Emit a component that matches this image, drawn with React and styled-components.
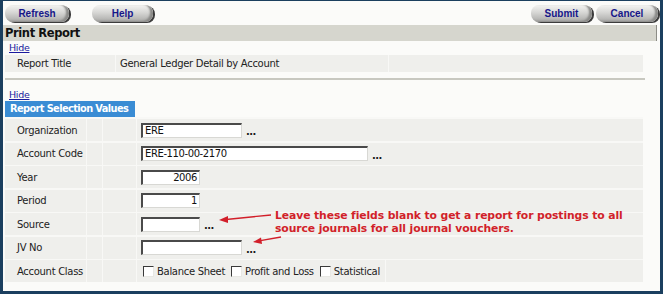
import React from "react";
import styled, { createGlobalStyle } from "styled-components";

const GlobalStyle = createGlobalStyle`
  html, body { margin: 0; padding: 0; background: #ffffff; }
  body { font-family: "DejaVu Sans", Verdana, sans-serif; }
`;

const Frame = styled.div`
  position: relative;
  width: 663px;
  height: 294px;
  box-sizing: border-box;
  border: 3px solid #1b3f5f;
  border-top-width: 1px;
  background: #fbfbf9;
  overflow: hidden;
`;

const Toolbar = styled.div`
  display: flex;
  justify-content: space-between;
  align-items: center;
  height: 24px;
  padding: 0 2px;
  box-sizing: border-box;
`;

const BtnGroup = styled.div`
  display: flex;
  gap: ${(p) => p.gap}px;
`;

const Button = styled.button`
  width: ${(p) => p.w}px;
  height: 17px;
  padding: 0;
  border: none;
  border-radius: 8px;
  background: linear-gradient(#f4f4f2 0%, #d6d6d4 45%, #a9a9a7 100%);
  box-shadow: 2px 1px 0 #3c3c3c, inset -3px -1px 2px #8a8a88;
  color: #16168a;
  font-family: "Liberation Sans", Arial, sans-serif;
  font-weight: 700;
  font-size: 10px;
  cursor: pointer;
`;

const SectionHeader = styled.div`
  width: 654px;
  height: 16px;
  box-sizing: border-box;
  background: #d6d6ce;
  border-right: 1px solid #8c8c86;
  padding-left: 2px;
  font-weight: 700;
  font-size: 11.5px;
  letter-spacing: -0.4px;
  line-height: 16px;
  color: #111;
`;

const Content = styled.div`
  padding-left: 2px;
`;

const HideLink = styled.a`
  display: block;
  padding-left: 4px;
  margin-top: ${(p) => p.top}px;
  height: 12px;
  font-size: 9.5px;
  letter-spacing: -0.3px;
  line-height: 12px;
  color: #1a1a9e;
  text-decoration: underline;
`;

const TitleRow = styled.div`
  display: grid;
  grid-template-columns: 110px 272px 1fr;
  column-gap: 1px;
  width: 638px;
  height: 17px;
  margin-top: 1px;
  background: #f8f8f6;
`;

const Cell = styled.div`
  display: flex;
  align-items: center;
  gap: ${(p) => p.gap || 0}px;
  padding-left: ${(p) => p.pad || 0}px;
  background: #efefec;
  font-size: 10px;
  letter-spacing: -0.3px;
  color: #222;
  white-space: nowrap;
`;

const Rule = styled.div`
  width: 640px;
  height: 2px;
  margin-top: 6px;
  background: #c8c8c0;
`;

const Tab = styled.div`
  width: 130px;
  height: 16px;
  box-sizing: border-box;
  padding-left: 5px;
  background: #3a8cd4;
  color: #fff;
  font-weight: 700;
  font-size: 9.8px;
  letter-spacing: -0.6px;
  line-height: 16px;
  white-space: nowrap;
  overflow: hidden;
`;

const Table = styled.div`
  display: grid;
  grid-template-columns: 81px 15px 33px 1fr;
  grid-auto-rows: 22px;
  gap: 1.5px 1px;
  width: 638px;
  padding-top: 2px;
  background: #f8f8f6;
`;

const ValueCell = styled(Cell)`
  padding-left: 4px;
  gap: 4px;
`;

const Input = styled.div`
  width: ${(p) => p.w}px;
  height: 15px;
  box-sizing: border-box;
  border-top: 2px solid #4a4a4a;
  border-left: 2px solid #4a4a4a;
  border-bottom: 1px solid #d8d8d4;
  border-right: 1px solid #d8d8d4;
  background: #ffffff;
  padding: 0 2px;
  font-size: 10px;
  letter-spacing: -0.4px;
  line-height: 12px;
  text-align: ${(p) => (p.right ? "right" : "left")};
  color: #111;
`;

const Lookup = styled.span`
  font-weight: 700;
  font-size: 10px;
  letter-spacing: -0.5px;
  color: #1a1a1a;
  margin-top: 3px;
`;

const CheckGroup = styled.div`
  display: flex;
  align-items: center;
  gap: 6px;
  width: 248px;
  height: 100%;
  background: #efefec;
  border-right: 1px solid #f8f8f6;
`;

const CheckItem = styled.label`
  display: flex;
  align-items: center;
  gap: 3px;
`;

const Box = styled.span`
  width: 11px;
  height: 11px;
  box-sizing: border-box;
  border-top: 1px solid #3a3a3a;
  border-left: 1px solid #3a3a3a;
  border-bottom: 1px solid #e8e8e4;
  border-right: 1px solid #e8e8e4;
  background: #fff;
`;

const Note = styled.div`
  position: absolute;
  left: 272px;
  top: 208px;
  color: #d21f2a;
  font-weight: 700;
  font-size: 10.8px;
  letter-spacing: -0.1px;
  line-height: 13px;
  white-space: nowrap;
`;

const Arrows = styled.svg`
  position: absolute;
  left: -3px;
  top: -1px;
  pointer-events: none;
`;

const rows = [
  { label: "Organization", input: { w: 101, value: "ERE" }, lookup: true },
  { label: "Account Code", input: { w: 227, value: "ERE-110-00-2170" }, lookup: true },
  { label: "Year", input: { w: 59, value: "2006", right: true } },
  { label: "Period", input: { w: 59, value: "1", right: true } },
  { label: "Source", input: { w: 59, value: "" }, lookup: true },
  { label: "JV No", input: { w: 101, value: "" }, lookup: true },
];

export default function App() {
  return (
    <>
      <GlobalStyle />
      <Frame>
        <Toolbar>
          <BtnGroup gap={23}>
            <Button w={64}>Refresh</Button>
            <Button w={61}>Help</Button>
          </BtnGroup>
          <BtnGroup gap={4}>
            <Button w={61}>Submit</Button>
            <Button w={62}>Cancel</Button>
          </BtnGroup>
        </Toolbar>
        <SectionHeader>Print Report</SectionHeader>
        <Content>
          <HideLink top={1}>Hide</HideLink>
          <TitleRow>
            <Cell pad={12}>Report Title</Cell>
            <Cell pad={4}>General Ledger Detail by Account</Cell>
            <Cell />
          </TitleRow>
          <Rule />
          <HideLink top={9}>Hide</HideLink>
          <Tab>Report Selection Values</Tab>
          <Table>
            {rows.map((r) => (
              <React.Fragment key={r.label}>
                <Cell pad={12}>{r.label}</Cell>
                <Cell />
                <Cell />
                <ValueCell>
                  <Input w={r.input.w} right={r.input.right}>
                    {r.input.value}
                  </Input>
                  {r.lookup && <Lookup>...</Lookup>}
                </ValueCell>
              </React.Fragment>
            ))}
            <Cell pad={12}>Account Class</Cell>
            <Cell />
            <Cell />
            <Cell style={{ background: "#f8f8f6" }}>
              <CheckGroup>
                <span />
                <CheckItem><Box />Balance Sheet</CheckItem>
                <CheckItem><Box />Profit and Loss</CheckItem>
                <CheckItem><Box />Statistical</CheckItem>
              </CheckGroup>
              <Cell style={{ flex: 1, height: "100%" }} />
            </Cell>
          </Table>
        </Content>
        <Note>
          Leave these fields blank to get a report for postings to all
          <br />
          source journals for all journal vouchers.
        </Note>
        <Arrows width="663" height="294">
          <g stroke="#d21f2a" strokeWidth="1.3" fill="#d21f2a">
            <line x1="271" y1="215" x2="226" y2="219.5" />
            <polygon points="219,220 228,216 228,223" stroke="none" />
            <line x1="281" y1="237" x2="259" y2="240.8" />
            <polygon points="253,242 261,237.5 262,244" stroke="none" />
          </g>
        </Arrows>
      </Frame>
    </>
  );
}
